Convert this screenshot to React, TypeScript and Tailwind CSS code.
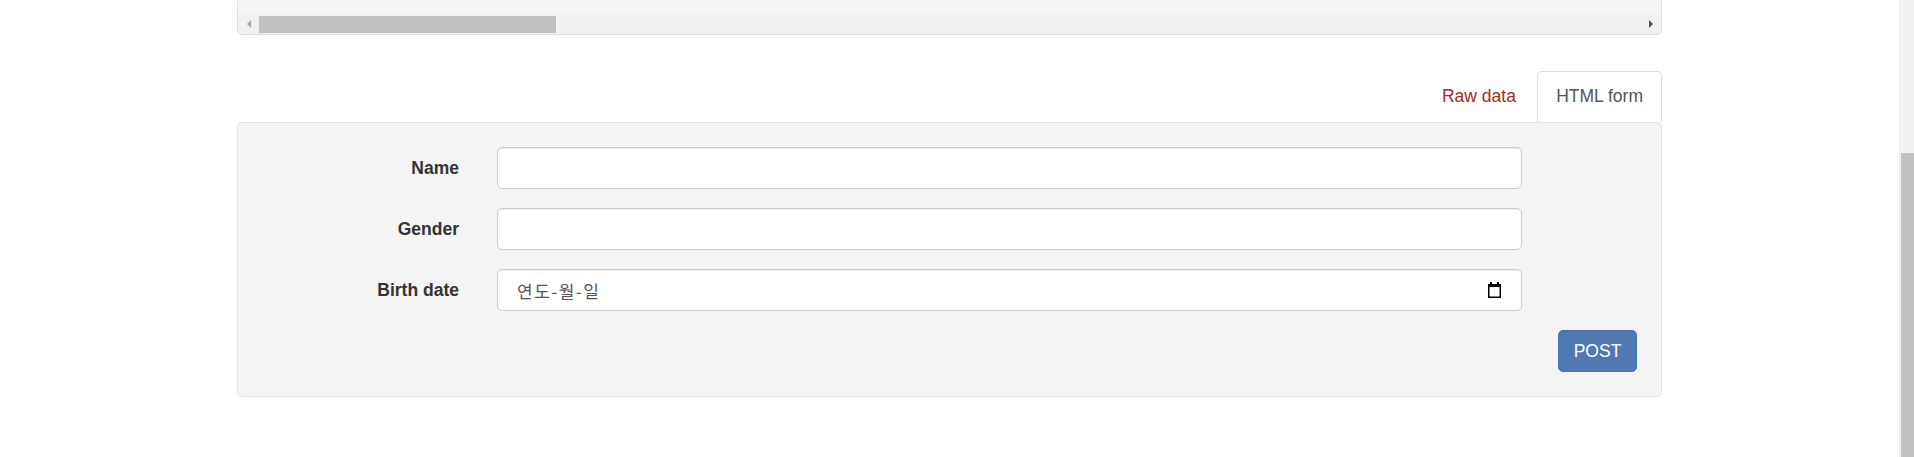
const fields = ['Name', 'Gender'];

function CalendarIcon() {
  return (
    <svg width="13" height="16" viewBox="0 0 13 16" fill="none">
      <rect x="2" y="0" width="2" height="3" fill="#000" />
      <rect x="9" y="0" width="2" height="3" fill="#000" />
      <rect x="0.75" y="2.75" width="11.5" height="12.5" stroke="#000" strokeWidth="1.5" />
      <rect x="0" y="2" width="13" height="3" fill="#000" />
    </svg>
  );
}

export default function App() {
  return (
    <div className="flex h-[457px] w-[1914px] overflow-hidden bg-white font-['Liberation_Sans',Arial,sans-serif] text-[17.5px] leading-[25px]">
      <div className="flex-1">
        <div className="mx-auto w-[1425px]">
          {/* response panel, scrolled to its bottom */}
          <div className="overflow-hidden rounded-b-[5px] border-x border-b border-[#dedede]">
            <div className="h-[14px] bg-[#f5f5f7]" />
            <div className="flex h-[20px] items-center bg-[#f1f1f1]">
              <div className="flex w-[21px] justify-center">
                <div className="h-0 w-0 border-y-[4px] border-r-[4px] border-y-transparent border-r-[#a3a3a3]" />
              </div>
              <div className="h-[17px] w-[297px] bg-[#c1c1c1]" />
              <div className="flex-1" />
              <div className="flex w-[21px] justify-center">
                <div className="h-0 w-0 border-y-[4px] border-l-[4px] border-y-transparent border-l-[#505050]" />
              </div>
            </div>
          </div>

          <div className="mt-[36px] flex justify-end">
            <a className="mr-[2.5px] px-[18.75px] pt-[13px] text-[#a52a1f]">Raw data</a>
            <div className="h-[51px] rounded-t-[5px] border-x border-t border-[#dddddd] bg-white px-[18px] pt-[12px] text-[#555]">
              HTML form
            </div>
          </div>

          <div className="rounded-[5px] border border-[#e3e3e3] bg-[#f4f4f4] px-[24px] pt-[24px] pb-[24px]">
            {fields.map((f) => (
              <div key={f} className="mb-[19px] flex items-center gap-[38px]">
                <label className="w-[197px] text-right font-bold text-[#333]">{f}</label>
                <input
                  readOnly
                  className="h-[42px] w-[1025px] rounded-[5px] border border-[#cccccc] bg-white shadow-[inset_0_1px_1px_rgba(0,0,0,0.075)] outline-none"
                />
              </div>
            ))}
            <div className="mb-[19px] flex items-center gap-[38px]">
              <label className="w-[197px] text-right font-bold text-[#333]">Birth date</label>
              <div className="flex h-[42px] w-[1025px] items-center justify-between rounded-[5px] border border-[#cccccc] bg-white pr-[20px] pl-[19px] shadow-[inset_0_1px_1px_rgba(0,0,0,0.075)]">
                <span className="font-['Noto_Sans_CJK_KR',sans-serif] text-[17px] tracking-[1.5px] text-[#555]">연도-월-일</span>
                <CalendarIcon />
              </div>
            </div>
            <div className="flex justify-end">
              <button className="h-[42px] w-[79px] rounded-[5px] border border-[#4670a8] bg-[#5079b3] text-white">
                POST
              </button>
            </div>
          </div>
        </div>
      </div>
      <div className="w-[15px] bg-[#f1f1f1] pt-[153px] pl-[2px]">
        <div className="h-full bg-[#c1c1c1]" />
      </div>
    </div>
  );
}
